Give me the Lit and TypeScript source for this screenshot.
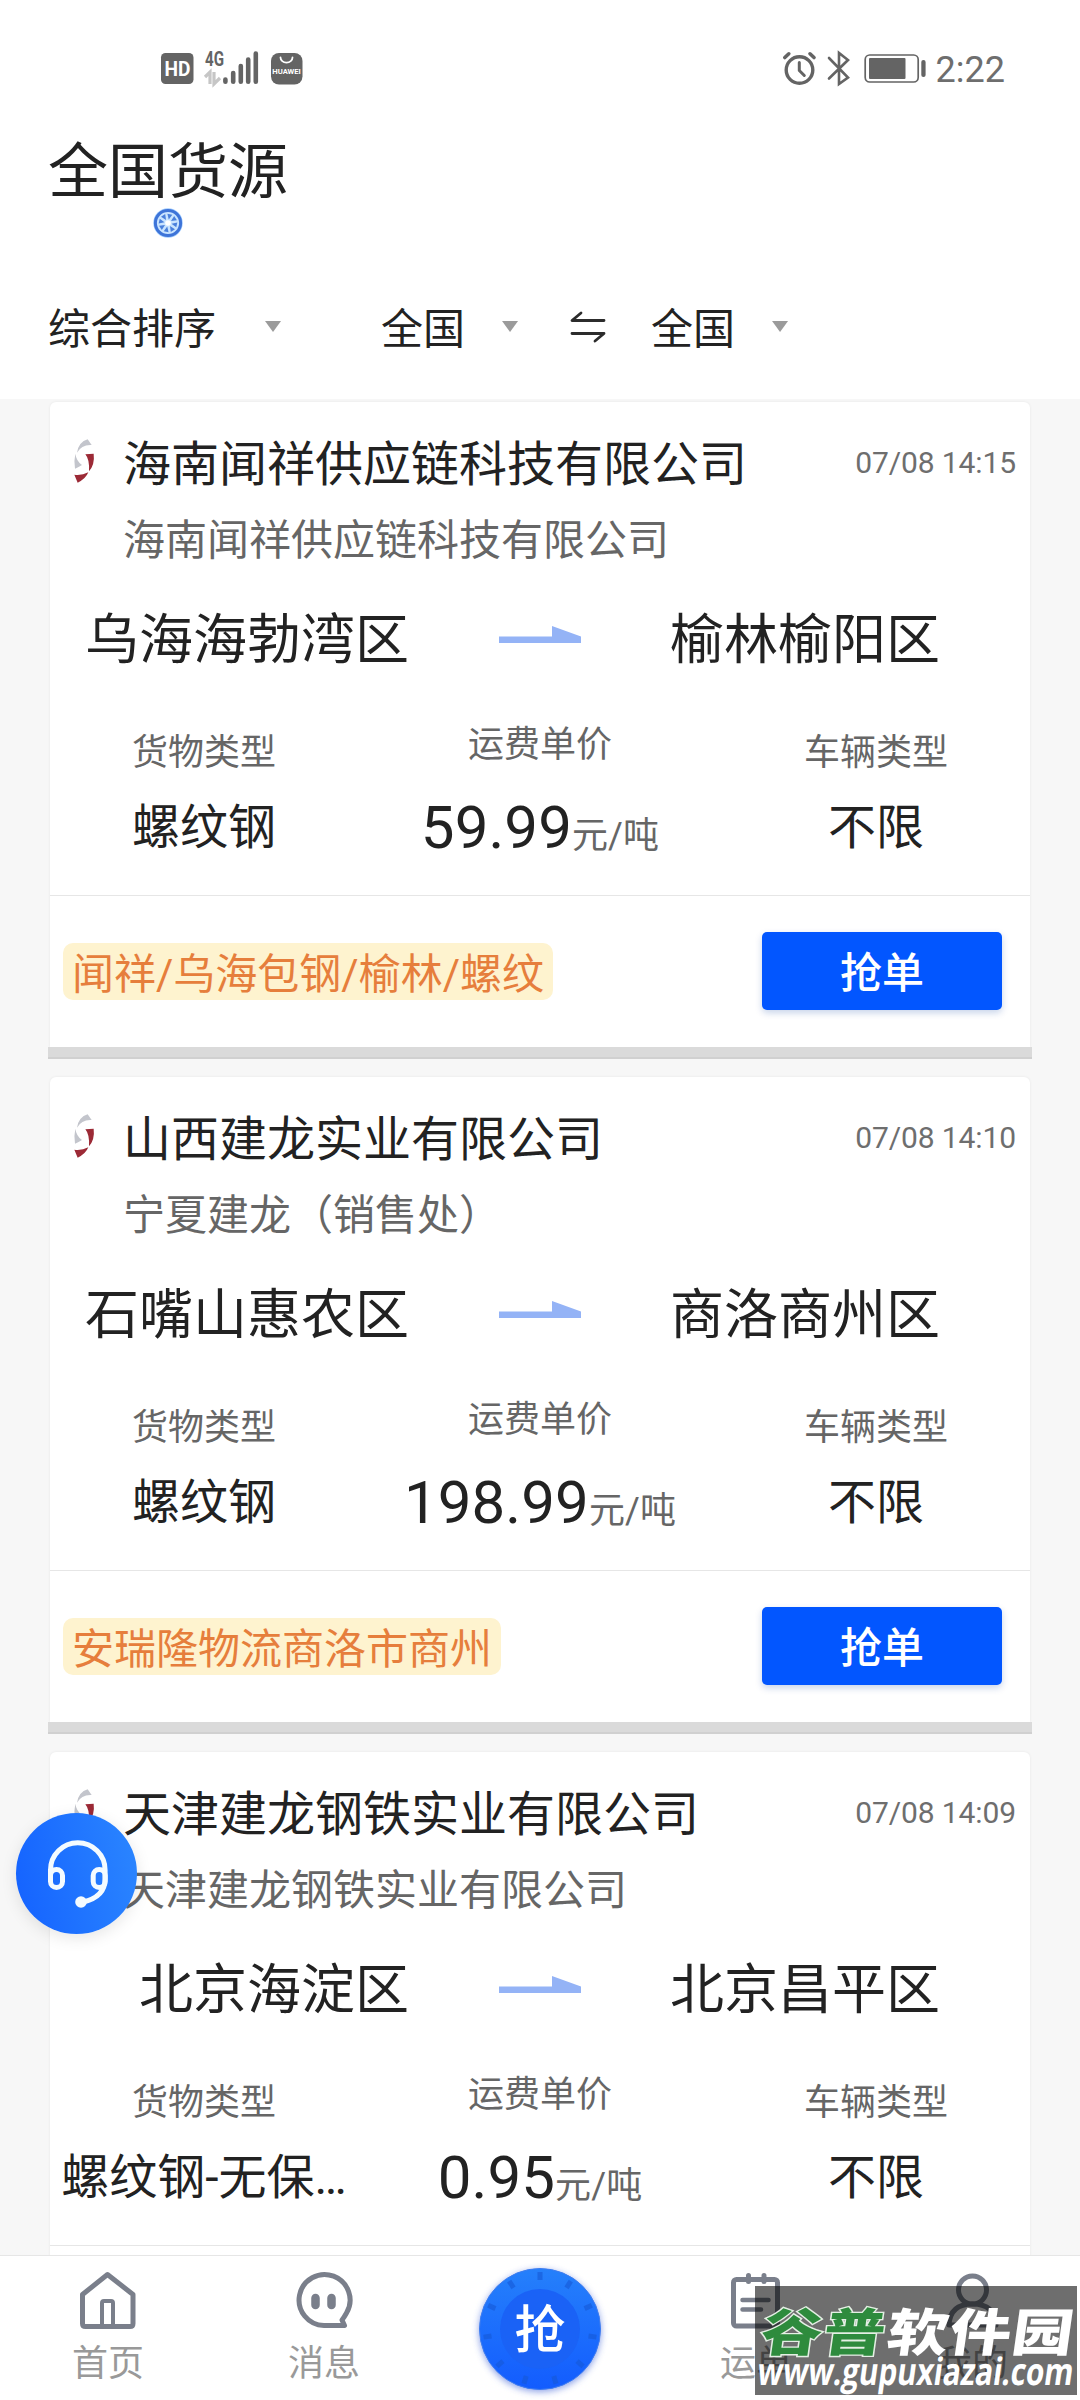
import { LitElement, html, css, svg } from "lit";
import { customElement, property } from "lit/decorators.js";

interface Freight {
  company: string;
  sub: string;
  time: string;
  from: string;
  to: string;
  cargo: string;
  price: string;
  vehicle: string;
  tag: string;
}

const freights: Freight[] = [
  {
    company: "海南闻祥供应链科技有限公司",
    sub: "海南闻祥供应链科技有限公司",
    time: "07/08 14:15",
    from: "乌海海勃湾区",
    to: "榆林榆阳区",
    cargo: "螺纹钢",
    price: "59.99",
    vehicle: "不限",
    tag: "闻祥/乌海包钢/榆林/螺纹",
  },
  {
    company: "山西建龙实业有限公司",
    sub: "宁夏建龙（销售处）",
    time: "07/08 14:10",
    from: "石嘴山惠农区",
    to: "商洛商州区",
    cargo: "螺纹钢",
    price: "198.99",
    vehicle: "不限",
    tag: "安瑞隆物流商洛市商州",
  },
  {
    company: "天津建龙钢铁实业有限公司",
    sub: "天津建龙钢铁实业有限公司",
    time: "07/08 14:09",
    from: "北京海淀区",
    to: "北京昌平区",
    cargo: "螺纹钢-无保…",
    price: "0.95",
    vehicle: "不限",
    tag: "",
  },
];

@customElement("status-bar")
export class StatusBar extends LitElement {
  static styles = css`
    :host {
      display: flex;
      justify-content: space-between;
      height: 90px;
      padding: 45px 75px 0 160px;
      box-sizing: border-box;
    }
    .right {
      display: flex;
      gap: 10px;
    }
    .clock {
      font-size: 36px;
      line-height: 50px;
      color: #6e6e6e;
    }
    svg {
      display: block;
    }
  `;

  render() {
    return html`
      <svg width="145" height="45" viewBox="160 45 145 45">
        <rect x="161" y="53" width="32.5" height="31" rx="4.5" fill="#646464" />
        <text x="177.4" y="76" text-anchor="middle" font-family="Roboto, sans-serif" font-weight="700" font-size="21" textLength="26" lengthAdjust="spacingAndGlyphs" fill="#fff">HD</text>
        <text x="205" y="66" font-family="Roboto, sans-serif" font-weight="700" font-size="20.500" textLength="19" lengthAdjust="spacingAndGlyphs" fill="#646464">4G</text>
        <path d="M205 77l5-5v12M214 72v12l6-6" fill="none" stroke="#c6c6c6" stroke-width="3.2" />
        <g stroke="#646464" stroke-width="4.6" stroke-linecap="round">
          <path d="M225.4 79.5v2.2M233.2 73v8.7M240.8 66v15.7M248.2 59.500v22.2M255.800 53.500v28.200" />
        </g>
        <rect x="271" y="53" width="31.5" height="31.5" rx="8" fill="#646464" />
        <path d="M280.500 57.500a6 5.200 0 0 0 12 0" fill="none" stroke="#fff" stroke-width="1.8" stroke-linecap="round" />
        <text x="272.300" y="74" font-family="Roboto, sans-serif" font-weight="700" font-size="7.500" textLength="28.500" lengthAdjust="spacingAndGlyphs" fill="#fff">HUAWEI</text>
      </svg>
      <div class="right">
        <svg width="145" height="45" viewBox="781 45 145 45" fill="none" stroke="#646464">
          <circle cx="799.5" cy="70" r="13.300" stroke-width="3.400" />
          <path d="M799.300 62.500v8l5 5" stroke-width="3" stroke-linecap="round" stroke-linejoin="round" />
          <path d="M784.800 57.500l4-3.700M814 57.500l-4-3.700" stroke-width="3.600" stroke-linecap="round" />
          <path d="M829 58l19 19.500-9 6.500V53l9 7L829 78.500" stroke-width="2.600" stroke-linecap="round" />
          <rect x="865.200" y="55" width="53" height="27" rx="4.500" stroke-width="1.700" />
          <rect x="869" y="58" width="36.500" height="21" rx="1" fill="#646464" stroke="none" />
          <rect x="921.300" y="60" width="4.300" height="17" rx="2.100" fill="#646464" stroke="none" />
        </svg>
        <div class="clock">2:22</div>
      </div>
    `;
  }
}

@customElement("list-header")
export class ListHeader extends LitElement {
  static styles = css`
    :host {
      display: block;
      height: 309px;
      padding: 0 48px;
      box-sizing: border-box;
      color: #222;
    }
    .title {
      height: 118px;
      padding-top: 46px;
      box-sizing: border-box;
      font-size: 60px;
      line-height: 74px;
    }
    .wheel {
      display: block;
      margin-left: 105px;
    }
    .filters {
      display: flex;
      align-items: center;
      margin-top: 61px;
      height: 60px;
      font-size: 42px;
      line-height: 60px;
    }
    .caret {
      width: 16px;
      height: 11px;
      background: #9b9b9b;
      clip-path: polygon(0 0, 100% 0, 50% 100%);
      margin: -5px 0 0 37px;
    }
    .sort {
      margin-right: 100px;
    }
    .sort .caret {
      margin-left: 49px;
    }
    .item {
      display: flex;
      align-items: center;
    }
    .item span {
      padding-top: 2px;
    }
    .swap {
      margin: -4px 45px 0 52px;
    }
  `;

  private item(label: string, cls = "") {
    return html`<div class="item ${cls}"><span>${label}</span><div class="caret"></div></div>`;
  }

  render() {
    const spokes = Array.from({ length: 8 }, (_, i) => i * 45 + 12);
    return html`
      <div class="title">全国货源</div>
      <svg class="wheel" width="30" height="30" viewBox="-15 -15 30 30">
        <circle r="14.700" fill="#9fcbff" />
        <circle r="12.600" fill="#c9e4ff" stroke="#3e74d8" stroke-width="3" />
        ${spokes.map((a) => svg`<path d="M-2.500-9h5L0-3.600z" fill="#4a80dc" transform="rotate(${a})" />`)}
        <circle r="2.800" fill="#fff" />
      </svg>
      <div class="filters">
        ${this.item("综合排序", "sort")} ${this.item("全国")}
        <svg class="swap" width="36" height="32" viewBox="0 0 36 32" fill="none" stroke="#2c2c2c" stroke-width="2.800" stroke-linecap="round" stroke-linejoin="round">
          <path d="M34 9.500H2L11 2M2 22.500h32L25 30" />
        </svg>
        ${this.item("全国")}
      </div>
    `;
  }
}

@customElement("freight-card")
export class FreightCard extends LitElement {
  @property({ attribute: false }) item!: Freight;

  static styles = css`
    :host {
      display: block;
      height: 675px;
      color: #222;
    }
    .card {
      margin: 0 50px;
      height: 645px;
      background: #fff;
      border-radius: 6px 6px 0 0;
      box-shadow: 0 0 3px rgba(0, 0, 0, 0.07);
      overflow: hidden;
    }
    .head {
      display: flex;
      padding: 32px 14px 0 20px;
      height: 107px;
      box-sizing: border-box;
    }
    .logo {
      margin-top: 3px;
      flex: none;
    }
    .company {
      font-size: 48px;
      line-height: 62px;
      padding-left: 24px;
      flex: 1;
      white-space: nowrap;
    }
    .time {
      font-size: 30px;
      line-height: 58px;
      color: #6e6e6e;
      letter-spacing: -0.1px;
    }
    .sub {
      padding: 2px 0 0 73px;
      font-size: 42px;
      line-height: 60px;
      height: 97px;
      box-sizing: border-box;
      color: #666;
    }
    .route {
      display: grid;
      grid-template-columns: 359px 261px 1fr;
      height: 116px;
      font-size: 54px;
      line-height: 70px;
    }
    .from {
      text-align: right;
    }
    .arrow {
      display: block;
      margin: 20px auto 0;
    }
    .metrics {
      display: grid;
      grid-template-columns: repeat(3, 336px);
      margin-left: -14px;
      height: 173px;
      text-align: center;
      white-space: nowrap;
    }
    .side {
      padding-top: 9px;
    }
    .mid {
      padding-top: 1px;
    }
    .label {
      font-size: 36px;
      line-height: 44px;
      color: #666;
    }
    .value {
      margin-top: 23px;
      font-size: 48px;
      line-height: 60px;
    }
    .price {
      margin-top: 31px;
      font-size: 60px;
      line-height: 60px;
      letter-spacing: 0.1px;
    }
    .unit {
      font-size: 36px;
      color: #666;
    }
    .foot {
      display: flex;
      align-items: center;
      justify-content: space-between;
      border-top: 1px solid #e6e6e6;
      height: 151px;
      padding: 0 28px 1px 13px;
      box-sizing: border-box;
    }
    .tag {
      font-size: 42px;
      line-height: 63px;
      height: 57px;
      margin-top: 2px;
      padding: 0 9px;
      border-radius: 10px;
      background: #fef3cf;
      color: #e67e3c;
    }
    .grab {
      width: 240px;
      height: 78px;
      border-radius: 5px;
      background: #0256ff;
      color: #fff;
      font-size: 42px;
      line-height: 84px;
      font-weight: 500;
      text-align: center;
      box-shadow: 0 3px 7px rgba(2, 60, 160, 0.22);
    }
    .edge {
      margin: 0 48px;
      height: 12px;
      background: #dadada;
      border-bottom: 2px solid #d0d0d0;
      box-sizing: border-box;
    }
  `;

  render() {
    const f = this.item;
    return html`
      <div class="card">
        <div class="head">
          <svg class="logo" width="29" height="48" viewBox="90 140 87 144">
            <path d="M143 147l12 17q-30-2-44 23q5-32 32-40zM106 190q3 22 20 34q-10 6-21 11q-4-24 1-45z" fill="#c3c5cc" />
            <path d="M136 192l25-2q4 32-14 53q2-36-11-51zM103 253q22 3 42-7q-8 20-32 31z" fill="#9c2a36" />
          </svg>
          <div class="company">${f.company}</div>
          <div class="time">${f.time}</div>
        </div>
        <div class="sub">${f.sub}</div>
        <div class="route">
          <div class="from">${f.from}</div>
          <svg class="arrow" width="82" height="18" viewBox="0 0 82 18">
            <path d="M0 10.500h53V0l29 10.500v6.500H0z" fill="#94b3f6" />
          </svg>
          <div>${f.to}</div>
        </div>
        <div class="metrics">
          <div class="side">
            <div class="label">货物类型</div>
            <div class="value">${f.cargo}</div>
          </div>
          <div class="mid">
            <div class="label">运费单价</div>
            <div class="price">${f.price}<span class="unit">元/吨</span></div>
          </div>
          <div class="side">
            <div class="label">车辆类型</div>
            <div class="value">${f.vehicle}</div>
          </div>
        </div>
        <div class="foot">
          ${f.tag ? html`<div class="tag">${f.tag}</div>` : html`<span></span>`}
          <div class="grab">抢单</div>
        </div>
      </div>
      <div class="edge"></div>
    `;
  }
}

@customElement("tab-bar")
export class TabBar extends LitElement {
  static styles = css`
    :host {
      display: grid;
      grid-template-columns: repeat(5, 216px);
      height: 145px;
      border-top: 1px solid #e6e6e6;
      box-sizing: border-box;
      background: #fff;
    }
    .tab {
      display: flex;
      flex-direction: column;
      align-items: center;
      padding-top: 12px;
      color: #999;
      font-size: 36px;
      line-height: 44px;
    }
    .tab svg {
      margin-bottom: 10px;
      flex: none;
    }
    .tab.main {
      padding-top: 3px;
    }
    .tab.main svg {
      margin: 0;
    }
  `;

  render() {
    const notches = Array.from({ length: 11 }, (_, i) => (i * 360) / 11);
    return html`
      <div class="tab">
        <svg width="64" height="64" viewBox="0 0 64 64" fill="none" stroke="#7a7f8b" stroke-width="5" stroke-linejoin="round">
          <path d="M6.500 26.500L31.500 6.500l25.500 20v29q0 3-3 3h-44.500q-3 0-3-3z" />
          <path d="M26 57V35q0-2 2-2h7q2 0 2 2v22" stroke-width="4" />
        </svg>
        首页
      </div>
      <div class="tab">
        <svg width="64" height="64" viewBox="0 0 64 64" fill="none" stroke="#7a7f8b" stroke-width="5" stroke-linejoin="round" stroke-linecap="round">
          <path d="M32 57.500A25.500 25.500 0 1 1 54.500 45Q52 49.500 50 52L52.500 57.500z" />
          <path d="M23.500 30v7M39.500 30v7" stroke-width="8.500" />
        </svg>
        消息
      </div>
      <div class="tab main">
        <svg width="140" height="140" viewBox="-70 -70 140 140">
          <defs>
            <linearGradient id="g" x1="0" y1="0" x2="0" y2="1">
              <stop offset="0" stop-color="#2580fb" />
              <stop offset="1" stop-color="#135cfe" />
            </linearGradient>
            <filter id="s" x="-30%" y="-30%" width="160%" height="160%">
              <feGaussianBlur stdDeviation="3.500" />
            </filter>
          </defs>
          <circle r="61" cy="2" fill="#3f63d8" opacity=".6" filter="url(#s)" />
          <circle r="60.500" fill="url(#g)" stroke="#3d7cf0" stroke-width="1" />
          ${notches.map((a) => svg`<rect x="-2.500" y="-57" width="5" height="8" fill="#1659d6" opacity=".6" transform="rotate(${a})" />`)}
          <circle r="40" fill="#1a62f6" />
          <text y="19" text-anchor="middle" font-size="51" font-weight="500" font-family="Noto Sans CJK SC, sans-serif" fill="#fff">抢</text>
        </svg>
      </div>
      <div class="tab">
        <svg width="64" height="64" viewBox="0 0 64 64" fill="none" stroke="#7a7f8b" stroke-width="5" stroke-linecap="round">
          <rect x="9.500" y="11.500" width="44" height="46.500" rx="3" />
          <path d="M24.500 7.500v6M40 7.500v6" />
          <path d="M18.500 32h26M18.500 41.500h18.500" stroke-width="4.500" />
        </svg>
        运单
      </div>
      <div class="tab">
        <svg width="64" height="64" viewBox="0 0 64 64" fill="none" stroke="#7a7f8b" stroke-width="5" stroke-linecap="round">
          <circle cx="32.500" cy="22" r="14" />
          <path d="M9 57q1-21 23.500-21T56 57z" stroke-linejoin="round" />
        </svg>
        我的
      </div>
    `;
  }
}

@customElement("app-root")
export class AppRoot extends LitElement {
  static styles = css`
    :host {
      display: flex;
      flex-direction: column;
      position: relative;
      width: 1080px;
      height: 2400px;
      overflow: hidden;
      background: #fff;
      font-family: Roboto, "Noto Sans CJK SC", sans-serif;
    }
    .list {
      flex: 1;
      min-height: 0;
      padding-top: 3px;
      background: #f7f7f7;
      overflow: hidden;
    }
    .service {
      position: absolute;
      left: 16px;
      top: 1813px;
      width: 121px;
      height: 121px;
      border-radius: 50%;
      background: linear-gradient(80deg, #1462ff, #2b86ff);
      box-shadow: 0 4px 16px rgba(0, 0, 0, 0.1);
    }
    .mark {
      position: absolute;
      left: 755px;
      top: 2286px;
      overflow: visible;
    }
  `;

  render() {
    return html`
      <status-bar></status-bar>
      <list-header></list-header>
      <div class="list">${freights.map((f) => html`<freight-card .item=${f}></freight-card>`)}</div>
      <tab-bar></tab-bar>
      <svg class="service" viewBox="0 0 121 121" fill="none" stroke="#f4fbff" stroke-width="5" stroke-linecap="round">
        <path d="M34.500 64V57a27.300 27.300 0 0 1 54.600 0V66Q89 84 67 89" />
        <rect x="34.500" y="56.500" width="12" height="18" rx="6" />
        <rect x="77.200" y="56.500" width="12" height="18" rx="6" />
        <circle cx="65" cy="89" r="5.800" fill="#f4fbff" stroke="none" />
      </svg>
      <svg class="mark" width="325" height="114" viewBox="0 0 325 114">
        <rect width="322" height="109" fill="#000" fill-opacity=".57" />
        <g font-family="Noto Sans CJK SC, sans-serif" font-weight="900" font-size="51" transform="translate(4 65) skewX(-8) scale(1.2 1)">
          <text x="0" y="0" textLength="103" fill="#2e8b3d" stroke="#e4efe4" stroke-width="2.600" paint-order="stroke">谷普</text>
          <text x="105" y="0" textLength="155" fill="#fff">软件园</text>
        </g>
        <g transform="translate(1 99) skewX(-8)">
          <text x="0" y="0" textLength="316" lengthAdjust="spacingAndGlyphs" font-family="Open Sans, sans-serif" font-weight="700" font-size="38" fill="#fff">www.gupuxiazai.com</text>
        </g>
      </svg>
    `;
  }
}
